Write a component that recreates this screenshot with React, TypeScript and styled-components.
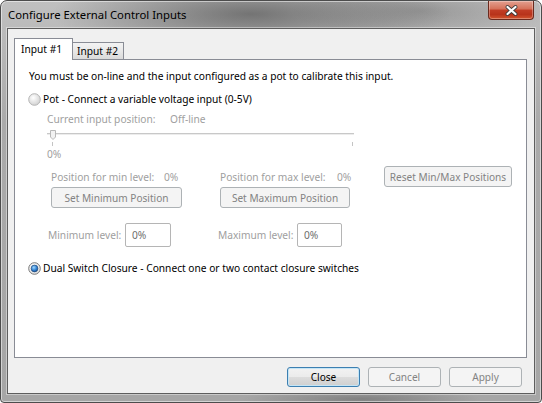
import React from 'react'
import styled, { createGlobalStyle } from 'styled-components'

const UI_FONT = `'Noto Sans', 'Open Sans', 'DejaVu Sans', sans-serif`

const GlobalStyle = createGlobalStyle`
	html, body {
		margin: 0;
		padding: 0;
		background: #ffffff;
	}
	body {
		width: 542px;
		height: 403px;
		overflow: hidden;
		font-family: ${UI_FONT};
	}
`

const DialogWindow = styled.div`
	box-sizing: border-box;
	width: 542px;
	height: 403px;
	display: flex;
	flex-direction: column;
	padding: 0 6px 8px 6px;
	border: 1px solid #4c4c4c;
	border-radius: 7px 7px 4px 4px;
	background:
		radial-gradient(ellipse 200px 40px at 250px 13px, rgba(55, 55, 55, 0.55), rgba(55, 55, 55, 0)),
		radial-gradient(ellipse 130px 30px at 420px 10px, rgba(80, 80, 80, 0.35), rgba(80, 80, 80, 0)),
		radial-gradient(ellipse 120px 10px at 360px 398px, rgba(60, 60, 60, 0.35), rgba(60, 60, 60, 0)),
		linear-gradient(#c0c0c0, #aaaaaa 30%, #a6a6a6);
	box-shadow: inset 0 0 0 1px rgba(255, 255, 255, 0.5);
	font-family: ${UI_FONT};
	font-size: 10.2px;
	color: #000;
`

const TitleBar = styled.div`
	height: 27px;
	display: flex;
	justify-content: space-between;
	align-items: flex-start;
	flex-shrink: 0;
`

const TitleText = styled.div`
	padding: 6px 0 0 1px;
	font-size: 11.3px;
	line-height: 16px;
	color: #000;
`

const CaptionClose = styled.div`
	box-sizing: border-box;
	width: 46px;
	height: 19px;
	margin-right: 1px;
	display: flex;
	align-items: center;
	justify-content: center;
	border: 1px solid #6b2a1e;
	border-top: none;
	border-radius: 0 0 4px 4px;
	background: linear-gradient(#e3a090 0%, #d57058 45%, #c13d26 50%, #b8331b 75%, #d2552f 100%);
	box-shadow: inset 0 0 0 1px rgba(255, 255, 255, 0.3);
`

const ClientArea = styled.div`
	flex: 1;
	display: flex;
	flex-direction: column;
	padding: 9px 6px 0 6px;
	background: #f0f0f0;
	border: 1px solid #5e5e5e;
	box-shadow: 0 0 0 1px rgba(255, 255, 255, 0.4);
`

const TabStrip = styled.div`
	height: 21px;
	display: flex;
	align-items: flex-end;
	position: relative;
	z-index: 1;
`

const Tab = styled.div<{ $active?: boolean }>`
	box-sizing: border-box;
	border: 1px solid #898c95;
	border-bottom: none;
	line-height: 15px;
	white-space: nowrap;
	${(p) =>
		p.$active
			? `
		width: 59px;
		height: 22px;
		margin-bottom: -1px;
		padding: 3px 0 0 6px;
		background: #ffffff;
	`
			: `
		width: 51px;
		height: 17px;
		padding: 1px 0 0 4px;
		border-left: none;
		background: linear-gradient(#f3f3f3, #e8e8e8 50%, #dadada);
	`}
`

const TabPanel = styled.div`
	box-sizing: border-box;
	width: 513px;
	height: 299px;
	display: flex;
	flex-direction: column;
	padding-left: 14px;
	background: #ffffff;
	border: 1px solid #898c95;
`

const TextLine = styled.div<{ $muted?: boolean; $top?: number }>`
	margin-top: ${(p) => p.$top ?? 0}px;
	line-height: 15px;
	white-space: nowrap;
	color: ${(p) => (p.$muted ? '#a0a0a0' : '#000')};
`

const RadioRow = styled.label<{ $top: number }>`
	height: 16px;
	margin-top: ${(p) => p.$top}px;
	display: flex;
	align-items: center;
	gap: 2px;
	white-space: nowrap;
`

const RadioMark = styled.svg`
	margin-left: -1px;
	flex-shrink: 0;
`

const SubBlock = styled.div`
	display: flex;
	flex-direction: column;
	padding-left: 18px;
`

const FieldRow = styled.div<{ $top?: number; $h: number }>`
	height: ${(p) => p.$h}px;
	margin-top: ${(p) => p.$top ?? 0}px;
	display: flex;
	align-items: center;
`

const FieldGroup = styled.div<{ $w: number; $indent?: number }>`
	width: ${(p) => p.$w}px;
	margin-left: ${(p) => p.$indent ?? 0}px;
	display: flex;
	align-items: center;
	flex-shrink: 0;
`

const FieldLabel = styled.span<{ $w: number }>`
	width: ${(p) => p.$w}px;
	flex-shrink: 0;
	color: #a0a0a0;
	white-space: nowrap;
`

const FieldValue = styled.span`
	color: #a0a0a0;
`

const LevelBox = styled.div<{ $w: number }>`
	box-sizing: border-box;
	width: ${(p) => p.$w}px;
	height: 24px;
	padding-left: 6px;
	display: flex;
	align-items: center;
	border: 1px solid #b5b5b5;
	border-radius: 2px;
	background: #ffffff;
	color: #6d6d6d;
`

const WinButton = styled.div<{ $w: number; $h: number; $default?: boolean }>`
	box-sizing: border-box;
	width: ${(p) => p.$w}px;
	height: ${(p) => p.$h}px;
	display: flex;
	align-items: center;
	justify-content: center;
	flex-shrink: 0;
	border-radius: 3px;
	white-space: nowrap;
	font-size: 10.1px;
	${(p) =>
		p.$default
			? `
		border: 1px solid #3c7fb1;
		background: linear-gradient(#f2f2f2 0%, #ebebeb 50%, #dddddd 50%, #cfcfcf 100%);
		box-shadow: inset 0 0 0 1px #c4e5f6;
		color: #000;
	`
			: `
		border: 1px solid #adb2b5;
		background: #f4f4f4;
		color: #838383;
	`}
`

const ButtonBar = styled.div`
	margin-top: 9px;
	padding-right: 6px;
	display: flex;
	justify-content: flex-end;
	gap: 8px;
`

const PositionSlider = styled.svg`
	display: block;
	margin-top: 1px;
`

const Radio = ({ checked }: { checked?: boolean }) => (
	<RadioMark width="13" height="13" viewBox="0 0 13 13">
		<defs>
			<radialGradient id={checked ? 'rOn' : 'rOff'} cx="0.4" cy="0.35" r="0.7">
				<stop offset="0" stopColor="#ffffff" />
				<stop offset="1" stopColor={checked ? '#dcdcdc' : '#cfcfcf'} />
			</radialGradient>
			<radialGradient id="rDot" cx="0.4" cy="0.35" r="0.7">
				<stop offset="0" stopColor="#9fd8ff" />
				<stop offset="0.6" stopColor="#2f7fd0" />
				<stop offset="1" stopColor="#164f92" />
			</radialGradient>
		</defs>
		<circle
			cx="6.5"
			cy="6.5"
			r="5.8"
			fill={`url(#${checked ? 'rOn' : 'rOff'})`}
			stroke={checked ? '#7a7a7a' : '#b4b4b4'}
			strokeWidth="1"
		/>
		{checked && <circle cx="6.5" cy="6.5" r="3.4" fill="url(#rDot)" stroke="#1d3f6e" strokeWidth="0.6" />}
	</RadioMark>
)

function App() {
	return (
		<>
			<GlobalStyle />
			<DialogWindow>
				<TitleBar>
					<TitleText>Configure External Control Inputs</TitleText>
					<CaptionClose>
						<svg width="13" height="11" viewBox="0 0 13 11">
							<path d="M2.5 2 L10.5 9 M10.5 2 L2.5 9" stroke="#3a3a3a" strokeWidth="3.8" strokeLinecap="round" />
							<path d="M2.5 2 L10.5 9 M10.5 2 L2.5 9" stroke="#ffffff" strokeWidth="2.2" strokeLinecap="round" />
						</svg>
					</CaptionClose>
				</TitleBar>
				<ClientArea>
					<TabStrip>
						<Tab $active>Input #1</Tab>
						<Tab>Input #2</Tab>
					</TabStrip>
					<TabPanel>
						<TextLine $top={9}>
							You must be on-line and the input configured as a pot to calibrate this input.
						</TextLine>
						<RadioRow $top={7}>
							<Radio />
							<span>Pot - Connect a variable voltage input (0-5V)</span>
						</RadioRow>
						<SubBlock>
							<FieldRow $top={4} $h={15}>
								<FieldLabel $w={123}>Current input position:</FieldLabel>
								<FieldValue>Off-line</FieldValue>
							</FieldRow>
							<PositionSlider width="307" height="20" viewBox="0 0 307 20">
								<rect x="0" y="6" width="307" height="1" fill="#c8c8c8" />
								<rect x="0" y="7" width="307" height="1" fill="#ececec" />
								<path d="M3.5 3.5 H8.5 V10 L6 12.5 L3.5 10 Z" fill="#f2f2f2" stroke="#b8b8b8" strokeWidth="1" />
								<rect x="5" y="15" width="1" height="4" fill="#c4c4c4" />
								<rect x="305" y="15" width="1" height="4" fill="#c4c4c4" />
							</PositionSlider>
							<TextLine $muted>0%</TextLine>
							<FieldRow $top={4} $h={21}>
								<FieldGroup $indent={4} $w={169}>
									<FieldLabel $w={113}>Position for min level:</FieldLabel>
									<FieldValue>0%</FieldValue>
								</FieldGroup>
								<FieldGroup $w={164}>
									<FieldLabel $w={117}>Position for max level:</FieldLabel>
									<FieldValue>0%</FieldValue>
								</FieldGroup>
								<WinButton $w={128} $h={21}>
									Reset Min/Max Positions
								</WinButton>
							</FieldRow>
							<FieldRow $h={21}>
								<FieldGroup $indent={4} $w={169}>
									<WinButton $w={131} $h={21}>
										Set Minimum Position
									</WinButton>
								</FieldGroup>
								<FieldGroup $w={164}>
									<WinButton $w={130} $h={21}>
										Set Maximum Position
									</WinButton>
								</FieldGroup>
							</FieldRow>
							<FieldRow $top={15} $h={24}>
								<FieldGroup $indent={1} $w={170}>
									<FieldLabel $w={77}>Minimum level:</FieldLabel>
									<LevelBox $w={46}>0%</LevelBox>
								</FieldGroup>
								<FieldGroup $w={170}>
									<FieldLabel $w={79}>Maximum level:</FieldLabel>
									<LevelBox $w={45}>0%</LevelBox>
								</FieldGroup>
							</FieldRow>
						</SubBlock>
						<RadioRow $top={13}>
							<Radio checked />
							<span>Dual Switch Closure - Connect one or two contact closure switches</span>
						</RadioRow>
					</TabPanel>
					<ButtonBar>
						<WinButton $w={73} $h={20} $default>
							Close
						</WinButton>
						<WinButton $w={73} $h={20}>
							Cancel
						</WinButton>
						<WinButton $w={73} $h={20}>
							Apply
						</WinButton>
					</ButtonBar>
				</ClientArea>
			</DialogWindow>
		</>
	)
}

export default App
